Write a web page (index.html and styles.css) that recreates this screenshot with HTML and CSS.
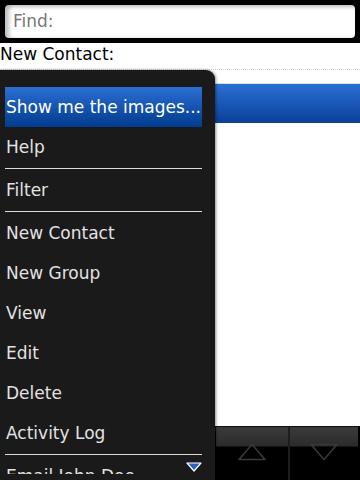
FILE: index.html
```html
<!DOCTYPE html>
<html lang="en">
<head>
    <meta charset="UTF-8">
    <meta name="viewport" content="width=device-width, initial-scale=1.0">
    <title>Contacts</title>
    <link rel="stylesheet" href="styles.css">
</head>
<body>

    <div class="find-bar">
        <div class="find-input">Find:</div>
    </div>

    <div class="page">
        <div class="field-label">New Contact:</div>
        <div class="list">
            <div class="list-row focused"></div>
        </div>
    </div>

    <div class="toolbar">
        <div class="tool-button">
            <svg width="30" height="18" viewBox="0 0 30 18"><path d="M15 1.5 L28 16.5 L2 16.5 Z" fill="none" stroke="#3a3a3a" stroke-width="1.5" stroke-linejoin="round"/></svg>
        </div>
        <div class="tool-button last">
            <svg width="30" height="18" viewBox="0 0 30 18"><path d="M2 1.5 L28 1.5 L15 16.5 Z" fill="none" stroke="#3a3a3a" stroke-width="1.5" stroke-linejoin="round"/></svg>
        </div>
    </div>

    <!-- popup menu over the page -->
    <div class="menu">
        <div class="menu-list">
            <div class="menu-item selected">Show me the images...</div>
            <div class="menu-item">Help</div>
            <div class="menu-sep"></div>
            <div class="menu-item">Filter</div>
            <div class="menu-sep"></div>
            <div class="menu-item">New Contact</div>
            <div class="menu-item">New Group</div>
            <div class="menu-item">View</div>
            <div class="menu-item">Edit</div>
            <div class="menu-item">Delete</div>
            <div class="menu-item">Activity Log</div>
            <div class="menu-sep"></div>
            <div class="menu-item">Email John Doe</div>
        </div>
        <svg class="more-arrow" width="16" height="10" viewBox="0 0 16 10"><path d="M1 1 L15 1 L8 9 Z" fill="#2a62c8" stroke="#fff" stroke-width="1.2" stroke-linejoin="round"/></svg>
    </div>

</body>
</html>
```

FILE: styles.css
```css
body {
    margin: 0;
    width: 360px;
    height: 480px;
    overflow: hidden;
    position: relative;
    display: flex;
    flex-direction: column;
    background: white;
    font-family: "DejaVu Sans", sans-serif;
    font-size: 17px;
}

.find-bar {
    background: black;
    padding: 5px 5px;
    height: 33px;
}

.find-input {
    height: 33px;
    line-height: 33px;
    padding-left: 8px;
    border-radius: 4px;
    background: linear-gradient(#ececec, #ffffff 6px);
    box-shadow: inset 4px 1px 4px rgba(0, 0, 0, 0.25);
    color: #777;
}

.page {
    flex: 1;
}

.field-label {
    height: 26px;
    line-height: 22px;
    color: black;
}

.list {
    border-top: 1px dotted #cfcfcf;
    padding-top: 13px;
}

.list-row {
    height: 39px;
    border-top: 1px solid #dcdcdc;
}

.list-row.focused {
    background: linear-gradient(#2b6fd3, #0b3f98);
}

.toolbar {
    height: 53px;
    border-top: 1px solid #111;
    background: black;
    display: flex;
    justify-content: flex-end;
    padding-right: 2px;
}

.tool-button {
    width: 72px;
    display: flex;
    justify-content: center;
    padding-top: 16px;
    background: linear-gradient(#3b3b3b, #2b2b2b 19px, black 20px);
    border-right: 2px solid #1e1e1e;
}

.tool-button.last {
    width: 68px;
    border-right: none;
    border-bottom-right-radius: 6px;
    background: linear-gradient(#3b3b3b, #2b2b2b 19px, transparent 20px);
}

.tool-button svg {
    display: block;
}

.menu {
    position: absolute;
    left: 0;
    top: 70px;
    width: 215px;
    bottom: 0;
    display: flex;
    flex-direction: column;
    background: #1a1a1a;
    border-top-right-radius: 9px;
    box-shadow: 1px 0 3px rgba(0, 0, 0, 0.45);
    padding: 17px 0 6px;
    box-sizing: border-box;
}

.menu-list {
    flex: 1;
    overflow: hidden;
}

.menu-item {
    height: 40px;
    line-height: 40px;
    margin: 0 13px 0 5px;
    padding-left: 1px;
    color: #e2e2e2;
    white-space: nowrap;
}

.menu-item.selected {
    color: white;
    background: linear-gradient(#2b6fd3, #003b8e);
}

.menu-sep {
    height: 1px;
    margin: 1px 13px 1px 5px;
    background: #dcdcdc;
}

.more-arrow {
    position: absolute;
    right: 13px;
    bottom: 8px;
}
```
